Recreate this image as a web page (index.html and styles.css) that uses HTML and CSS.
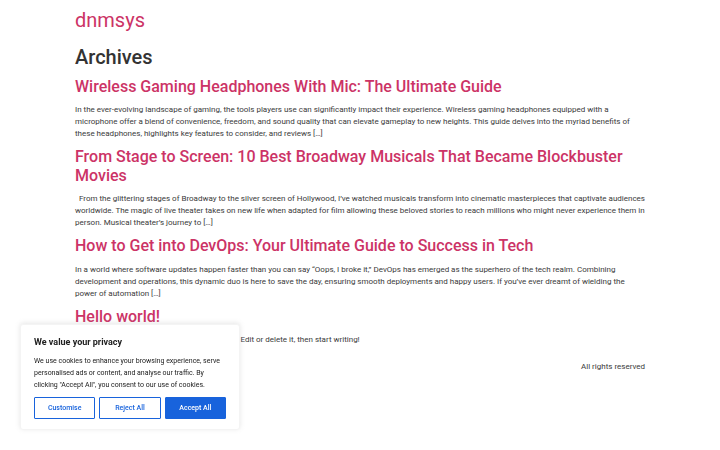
FILE: index.html
```html
<!DOCTYPE html>
<html lang="en">
<head>
<meta charset="utf-8">
<title>Archives - dnmsys</title>
<link rel="stylesheet" href="styles.css">
</head>
<body>
<header class="site-header">
  <a class="site-title" href="#">dnmsys</a>
</header>
<main class="site-main">
  <div class="page-header">
    <h1 class="entry-title">Archives</h1>
  </div>
  <div class="page-content">
    <article class="post">
      <h2 class="post-title"><a href="#">Wireless Gaming Headphones With Mic: The Ultimate Guide</a></h2>
      <p>In the ever-evolving landscape of gaming, the tools players use can significantly impact their experience. Wireless gaming headphones equipped with a microphone offer a blend of convenience, freedom, and sound quality that can elevate gameplay to new heights. This guide delves into the myriad benefits of these headphones, highlights key features to consider, and reviews […]</p>
    </article>
    <article class="post">
      <h2 class="post-title"><a href="#">From Stage to Screen: 10 Best Broadway Musicals That Became Blockbuster Movies</a></h2>
      <p>&nbsp; From the glittering stages of Broadway to the silver screen of Hollywood, I’ve watched musicals transform into cinematic masterpieces that captivate audiences worldwide. The magic of live theater takes on new life when adapted for film allowing these beloved stories to reach millions who might never experience them in person. Musical theater’s journey to […]</p>
    </article>
    <article class="post">
      <h2 class="post-title"><a href="#">How to Get into DevOps: Your Ultimate Guide to Success in Tech</a></h2>
      <p>In a world where software updates happen faster than you can say “Oops, I broke it,” DevOps has emerged as the superhero of the tech realm. Combining development and operations, this dynamic duo is here to save the day, ensuring smooth deployments and happy users. If you’ve ever dreamt of wielding the power of automation […]</p>
    </article>
    <article class="post">
      <h2 class="post-title"><a href="#">Hello world!</a></h2>
      <p>Welcome to WordPress. This is your first post. Edit or delete it, then start writing!</p>
    </article>
  </div>
</main>
<footer class="site-footer">
  <p class="copyright">All rights reserved</p>
</footer>

<div class="cky-banner">
  <p class="cky-title">We value your privacy</p>
  <p class="cky-des">We use cookies to enhance your browsing experience, serve personalised ads or content, and analyse our traffic. By clicking "Accept All", you consent to our use of cookies.</p>
  <div class="cky-btns">
    <button class="cky-btn">Customise</button>
    <button class="cky-btn">Reject All</button>
    <button class="cky-btn cky-accept">Accept All</button>
  </div>
</div>
</body>
</html>
```
FILE: styles.css
```css
html, body {
  margin: 0;
  padding: 0;
  background: #fff;
}
body {
  font-family: Roboto, "Liberation Sans", sans-serif;
  font-size: 8px;
  line-height: 12px;
  color: #3a3a3a;
}
a {
  color: #cc3366;
  text-decoration: none;
}
.site-header,
.site-main,
.site-footer {
  width: 570px;
  margin: 0 auto;
}
.site-header {
  padding: 8px 0;
}
.site-title {
  display: block;
  font-size: 20px;
  line-height: 24px;
  font-weight: 400;
}
.entry-title {
  font-size: 20px;
  line-height: 24px;
  font-weight: 500;
  margin: 4.5px 0 8px;
  color: #333;
}
.post-title {
  font-size: 16px;
  line-height: 19.2px;
  font-weight: 500;
  margin: 4px 0 8px;
}
.post p {
  margin: 0 0 7.2px;
}
.site-footer {
  display: flex;
  justify-content: flex-end;
  align-items: center;
  padding: 8px 0;
}
.copyright {
  margin: 0;
}
.cky-banner {
  position: fixed;
  left: 20px;
  bottom: 20px;
  width: 220px;
  box-sizing: border-box;
  padding: 11px 13px 10px;
  background: #fff;
  border: 0.5px solid #f4f4f4;
  border-radius: 3px;
  box-shadow: 0 -1px 5px 0 rgba(172, 171, 171, 0.3);
  color: #212121;
}
.cky-title {
  margin: 0 0 7px;
  font-size: 9px;
  line-height: 12px;
  font-weight: 700;
}
.cky-des {
  margin: 0;
  font-size: 7px;
  line-height: 12px;
}
.cky-btns {
  display: flex;
  gap: 4px;
  margin-top: 6.5px;
}
.cky-btn {
  flex: 1;
  height: 22px;
  padding: 0;
  font-family: Roboto, "Liberation Sans", sans-serif;
  font-size: 7px;
  font-weight: 500;
  color: #1863dc;
  background: #fff;
  border: 1px solid #1863dc;
  border-radius: 1px;
}
.cky-accept {
  background: #1863dc;
  color: #fff;
}
```
